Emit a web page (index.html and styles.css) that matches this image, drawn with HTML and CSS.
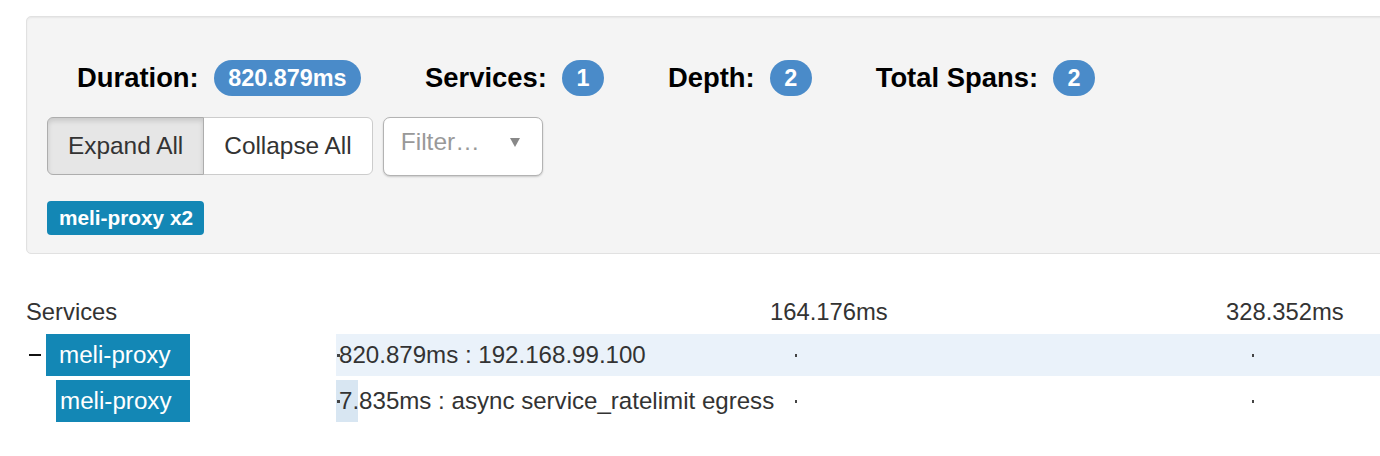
FILE: index.html
```html
<!DOCTYPE html>
<html lang="en">
<head>
<meta charset="utf-8">
<title>Trace</title>
<link rel="stylesheet" href="styles.css">
</head>
<body>
<div class="well">
  <div class="stats">
    <div class="stat"><span class="stat-label">Duration:</span><span class="badge">820.879ms</span></div>
    <div class="stat"><span class="stat-label">Services:</span><span class="badge">1</span></div>
    <div class="stat"><span class="stat-label">Depth:</span><span class="badge">2</span></div>
    <div class="stat"><span class="stat-label">Total Spans:</span><span class="badge">2</span></div>
  </div>
  <div class="controls">
    <div class="btn-group">
      <button class="btn active">Expand All</button>
      <button class="btn">Collapse All</button>
    </div>
    <div class="filter">
      <span class="filter-text">Filter…</span>
      <span class="caret"></span>
    </div>
  </div>
  <div class="tags">
    <span class="tag">meli-proxy x2</span>
  </div>
</div>

<div class="trace">
  <div class="head-svc">Services</div>
  <div class="axis">
    <span class="axis-label axis-1">164.176ms</span>
    <span class="axis-label axis-2">328.352ms</span>
  </div>

  <div class="svc-cell">
    <span class="toggle"></span>
    <span class="svc-label">meli-proxy</span>
  </div>
  <div class="span-cell">
    <div class="bar bar-root"></div>
    <span class="tick t0"></span><span class="tick t1"></span><span class="tick t2"></span>
    <span class="span-text">820.879ms : 192.168.99.100</span>
  </div>

  <div class="svc-cell">
    <span class="svc-label child">meli-proxy</span>
  </div>
  <div class="span-cell">
    <div class="bar bar-child" style="width:21.8px"></div>
    <span class="tick t0"></span><span class="tick t1"></span><span class="tick t2"></span>
    <span class="span-text">7.835ms : async service_ratelimit egress</span>
  </div>
</div>
</body>
</html>
```

FILE: styles.css
```css
html, body {
  margin: 0;
  padding: 0;
  overflow: hidden;
  background: #fff;
}
body {
  font-family: "Liberation Sans", Arial, sans-serif;
  color: #333;
  width: 1380px;
}

.well {
  margin: 16px -40px 0 26px;
  background: #f4f4f4;
  border: 1px solid #e1e1e1;
  border-radius: 5px;
  box-shadow: inset 0 1px 2px rgba(0,0,0,.06);
  padding: 43px 20px 18px 20px;
}

.stats {
  display: flex;
  align-items: center;
  gap: 64px;
  margin-left: 30px;
  height: 36px;
}
.stat {
  display: flex;
  align-items: center;
  gap: 15px;
}
.stat-label {
  font-weight: bold;
  font-size: 27.4px;
  color: #000;
}
.badge {
  display: inline-flex;
  align-items: center;
  justify-content: center;
  height: 36px;
  padding: 0 14.5px;
  border-radius: 18px;
  background: #4a8bc9;
  color: #fff;
  font-weight: bold;
  font-size: 23.4px;
}

.controls {
  display: flex;
  margin-top: 21px;
  gap: 10px;
}
.btn-group {
  display: flex;
}
.btn {
  font-family: inherit;
  font-size: 24.4px;
  color: #333;
  height: 58px;
  padding: 0 20px;
  background: #fff;
  border: 1px solid #ccc;
  margin: 0;
}
.btn:first-child {
  border-radius: 6px 0 0 6px;
}
.btn:last-child {
  border-radius: 0 6px 6px 0;
  margin-left: -1px;
}
.btn.active {
  background: #e6e6e6;
  border-color: #adadad;
  box-shadow: inset 0 3px 5px rgba(0,0,0,.125);
  position: relative;
  z-index: 1;
}

.filter {
  width: 160px;
  height: 59px;
  box-sizing: border-box;
  background: #fff;
  border: 1px solid #b3b3b3;
  border-radius: 7px;
  box-shadow: 0 1px 2px rgba(0,0,0,.18);
  display: flex;
  justify-content: space-between;
  align-items: flex-start;
  padding: 9px 22px 0 17px;
}
.filter-text {
  font-size: 24.5px;
  line-height: 30px;
  color: #999;
}
.caret {
  width: 0;
  height: 0;
  border-left: 5px solid transparent;
  border-right: 5px solid transparent;
  border-top: 9px solid #888;
  margin-top: 11px;
}

.tags {
  margin-top: 25px;
  display: flex;
}
.tag {
  display: inline-flex;
  align-items: center;
  height: 34px;
  padding: 0 11px 0 12px;
  background: #1387b5;
  color: #fff;
  font-weight: bold;
  font-size: 20.8px;
  border-radius: 4px;
}

.trace {
  margin: 41px 0 0 26px;
  display: grid;
  grid-template-columns: 310px 2290px;
  row-gap: 4px;
  font-size: 23.8px;
}
.head-svc {
  line-height: 34px;
  margin-bottom: 1px;
}
.axis {
  position: relative;
  line-height: 34px;
}
.axis-label {
  position: absolute;
  top: 0;
}
.axis-1 { left: 434px; }
.axis-2 { left: 890px; }

.svc-cell {
  display: flex;
  align-items: center;
  padding-left: 3px;
  height: 42px;
}
.toggle {
  width: 12px;
  height: 2.5px;
  background: #111;
  margin-right: 5px;
}
.svc-label {
  display: block;
  box-sizing: border-box;
  width: 144px;
  height: 42px;
  line-height: 42px;
  padding-left: 13px;
  background: #1387b5;
  color: #fff;
  font-size: 24.2px;
}
.svc-label.child {
  width: 134px;
  padding-left: 4px;
  margin-left: 27px;
}

.span-cell {
  position: relative;
  height: 42px;
  line-height: 42px;
  font-size: 24.1px;
}
.bar {
  position: absolute;
  left: 0;
  top: 0;
  height: 42px;
}
.bar-root {
  width: 2290px;
  background: #eaf2fa;
}
.bar-child {
  background: #d8e6f2;
}
.tick {
  position: absolute;
  top: 20px;
  width: 2.5px;
  height: 2.5px;
  background: #444;
}
.t0 { left: 1px; }
.t1 { left: 458.5px; }
.t2 { left: 915.5px; }
.span-text {
  position: relative;
  padding-left: 3px;
  color: #333;
}
```
